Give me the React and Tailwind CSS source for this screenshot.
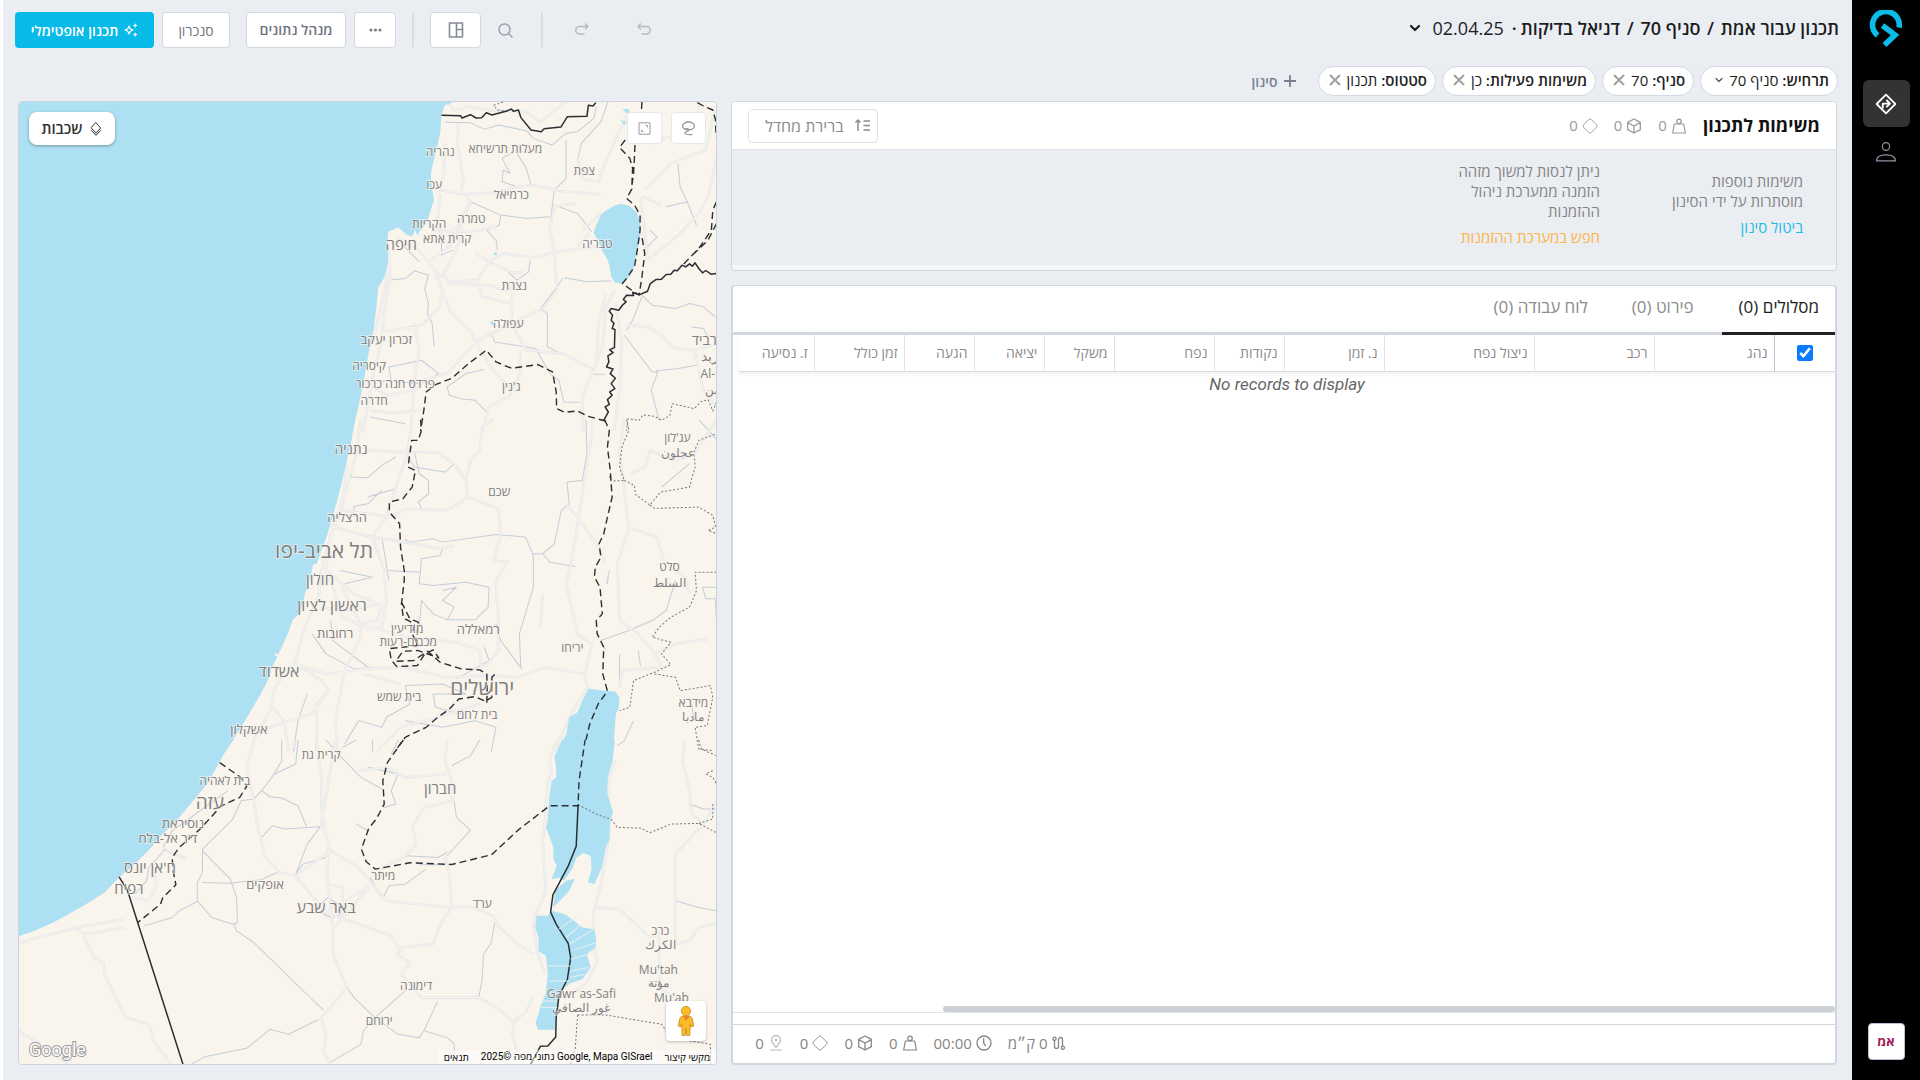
import React from "react";

function Icon({ size = 16, sw = 1.5, box = 24, children, className = "" }) {
  return (
    <svg width={size} height={size} viewBox={`0 0 ${box} ${box}`} fill="none" stroke="currentColor" strokeWidth={sw} strokeLinecap="round" strokeLinejoin="round" aria-hidden="true" className={`shrink-0 ${className}`}>
      {children}
    </svg>
  );
}

const WeightIcon = () => (
  <Icon sw={1.8}>
    <path d="M5 9h14l2.5 13.5h-19zM2.5 22.5h19" strokeLinecap="butt" />
    <circle cx="12" cy="5" r="3.4" />
  </Icon>
);
const CubeIcon = () => (
  <Icon sw={1.9}>
    <path d="M12 1.5l9.5 5v11L12 22.5l-9.5-5v-11zM2.5 7L12 12l9.5-5M12 12v10.5" />
  </Icon>
);
const DiamondIcon = () => (
  <Icon sw={1.4}>
    <path d="M10.2 2.2a2.6 2.6 0 0 1 3.6 0l8 8a2.6 2.6 0 0 1 0 3.6l-8 8a2.6 2.6 0 0 1-3.6 0l-8-8a2.6 2.6 0 0 1 0-3.6z" />
  </Icon>
);
const CloseIcon = () => (
  <Icon size={12} sw={2} box={12}>
    <path d="M1 1l10 10M11 1L1 11" strokeLinecap="butt" />
  </Icon>
);

function Stat({ icon, children }) {
  return (
    <span className="flex items-center gap-1">
      {icon}
      <span>{children}</span>
    </span>
  );
}

function Sidebar() {
  return (
    <nav className="flex w-[68px] shrink-0 flex-col items-center bg-black pb-5 pt-2.5">
      <a href="#home" aria-label="דף הבית" className="block">
        <svg width="34" height="38" viewBox="0 0 34 38" fill="none" stroke="#0bbbe8" strokeWidth="5.6" aria-hidden="true">
          <path d="M8.6 25.4A13.4 13.4 0 1 1 30 17.6" />
          <path d="M13.5 15.5L26 25L15.5 35" />
        </svg>
      </a>
      <a href="#planning" aria-label="תכנון" className="mt-8 flex h-[47px] w-[47px] items-center justify-center rounded-md bg-[#333333] text-white">
        <Icon size={22} sw={2}>
          <path d="M12 1.8L22.2 12L12 22.2L1.8 12z" />
          <path d="M8.5 16v-4.5h7M13 8.2l3.3 3.3L13 14.8" />
        </Icon>
      </a>
      <a href="#drivers" aria-label="נהגים" className="mt-3.5 text-[#8b95a5]">
        <Icon size={22} sw={1.2} box={22}>
          <ellipse cx="11" cy="5.5" rx="3.6" ry="3.9" />
          <path d="M1.5 19.8c0-4 4-6 9.5-6s9.5 2 9.5 6z" />
        </Icon>
      </a>
      <button className="mt-auto h-[37px] w-[37px] rounded border border-[#b9bfd0] bg-white text-[13px] font-bold text-[#a3195b]">אמ</button>
    </nav>
  );
}

const toolBtn = "flex h-9 items-center justify-center rounded-[4px] border border-[#d3d8e0] bg-white text-[14px]";

function Header() {
  return (
    <header className="flex items-start justify-between pl-3 pr-[13px] pt-3">
      <h1 className="flex items-center text-[18px] font-normal leading-8 text-[#1d1d1f]">
        <span className="font-semibold">
          תכנון עבור אמת <span className="mx-0.5">/</span> סניף 70 <span className="mx-0.5">/</span> דניאל בדיקות
        </span>
        <span className="mx-1 font-semibold">·</span>
        <button className="flex items-center gap-3">
          <span className="mr-1">02.04.25</span>
          <Icon size={12} sw={2.2} box={12}><path d="M2 4l4 4l4-4" /></Icon>
        </button>
      </h1>
      <div className="flex items-center text-[#6f7480]">
        <button aria-label="ביטול פעולה" className="ml-12 text-[#b7bac0]">
          <Icon size={14} box={14}><path d="M3.5 1L1 3.5L3.5 6M1 3.5h8.5a3.6 3.6 0 0 1 0 7.5H5" /></Icon>
        </button>
        <button aria-label="ביצוע חוזר" className="text-[#b7bac0]">
          <Icon size={14} box={14}><path d="M10.5 1L13 3.5L10.5 6M13 3.5H4.5a3.6 3.6 0 0 0 0 7.5H9" /></Icon>
        </button>
        <span className="ml-7 mr-8 h-[34px] w-0.5 bg-[#d9dce2]" />
        <button aria-label="חיפוש" className="text-[#9a9da3]">
          <Icon size={15} box={15} sw={1.4}><circle cx="6.5" cy="6.5" r="5.5" /><path d="M10.5 10.5L14 14" /></Icon>
        </button>
        <button aria-label="פריסה" className={`${toolBtn} mr-[17px] w-[51px] text-[#858b98]`}>
          <Icon size={16} box={16} sw={1.6}><path d="M1.5 1h13v14h-13zM8.5 1v14M8.5 7.5h6" /></Icon>
        </button>
        <span className="mx-4 h-[34px] w-0.5 bg-[#d9dce2]" />
        <button aria-label="עוד" className={`${toolBtn} w-[42px]`}>
          <svg width="13" height="4" fill="#7b808b" aria-hidden="true"><circle cx="2" cy="2" r="1.6" /><circle cx="6.5" cy="2" r="1.6" /><circle cx="11" cy="2" r="1.6" /></svg>
        </button>
        <button className={`${toolBtn} mr-2 w-[100px] pb-0.5 font-semibold`}>מנהל נתונים</button>
        <button className={`${toolBtn} mr-4 w-[68px]`}>סנכרון</button>
        <button className="mr-2 flex h-9 w-[139px] items-center justify-center gap-1.5 rounded-[4px] bg-[#08bae8] text-[14px] font-semibold text-white">
          <Icon size={14} box={14} sw={1.2}>
            <path d="M5 3l1.2 2.8L9 7L6.2 8.2L5 11L3.8 8.2L1 7l2.8-1.2z" />
            <path d="M11.2 1v3M9.7 2.5h3M11.2 10v3M9.7 11.5h3" />
          </Icon>
          תכנון אופטימלי
        </button>
      </div>
    </header>
  );
}

const chipClass = "flex h-[30px] items-center rounded-full border border-[#d3d8e2] bg-white pr-2 pb-0.5 text-[15px] text-[#222]";

function Chip({ label, value }) {
  return (
    <div className={`${chipClass} pl-2.5`}>
      <span><b className="font-semibold">{label}:</b> {value}</span>
      <button aria-label={`הסרת ${label}`} className="mr-1.5 text-[#a0a0a0]"><CloseIcon /></button>
    </div>
  );
}

function Filters() {
  return (
    <div className="mt-[18px] flex items-center gap-1.5 pr-3.5">
      <button className={`${chipClass} pl-3.5`}>
        <span><b className="font-semibold">תרחיש:</b> סניף 70</span>
        <Icon size={8} box={8} className="mr-1.5 text-[#555]" sw={1.2}><path d="M1 2.5l3 3l3-3" /></Icon>
      </button>
      <Chip label="סניף" value="70" />
      <Chip label="משימות פעילות" value="כן" />
      <Chip label="סטטוס" value="תכנון" />
      <button className="mr-4 flex items-center gap-1.5 text-[14px] font-semibold text-[#7a8091]">
        <Icon size={12} box={12} sw={1.8}><path d="M6 0v12M0 6h12" /></Icon>
        סינון
      </button>
    </div>
  );
}

function TasksPanel() {
  return (
    <section className="flex h-[170px] flex-col overflow-hidden rounded-[4px] border border-[#d2d7df] bg-[#f3f5f9]">
      <div className="flex h-12 shrink-0 items-center border-b border-[#e2e4e8] bg-white pl-4 pr-4">
        <h2 className="pb-0.5 text-[18px] font-bold leading-6 text-[#111]">משימות לתכנון</h2>
        <div className="mr-4 flex items-center gap-4 text-[15px] text-[#9a9a9a]">
          <Stat icon={<WeightIcon />}>0</Stat>
          <Stat icon={<CubeIcon />}>0</Stat>
          <Stat icon={<DiamondIcon />}>0</Stat>
        </div>
        <button className="mr-auto flex h-[34px] w-[130px] items-center justify-between rounded border border-[#e0e2e6] pl-4 pr-1.5 text-[16px] text-[#8c8c8c]">
          <Icon size={17} box={17} sw={1.5}>
            <path d="M9.5 4h6.5M9.5 8.5h6.5M9.5 13h6.5M4 14V3M1.5 5.5L4 3l2.5 2.5" strokeLinecap="butt" />
          </Icon>
          ברירת מחדל
        </button>
      </div>
      <div className="flex h-[115px] shrink-0 items-center bg-[#eaeef3] pb-2 pr-[33px] text-[15px] leading-5 text-[#858585]">
        <div className="w-[203px]">
          <p className="w-[132px]">משימות נוספות מוסתרות על ידי הסינון</p>
          <a href="#clear" className="mt-1.5 block text-[#22bce6]">ביטול סינון</a>
        </div>
        <div>
          <p>ניתן לנסות למשוך מזהה<br />הזמנה ממערכת ניהול<br />ההזמנות</p>
          <a href="#orders" className="mt-1.5 block text-[#ffb347]">חפש במערכת ההזמנות</a>
        </div>
      </div>
    </section>
  );
}

const columns = [
  ["נהג", "w-[120px]"],
  ["רכב", "w-[120px]"],
  ["ניצול נפח", "w-[150px]"],
  ["נ. זמן", "w-[100px]"],
  ["נקודות", "w-[70px]"],
  ["נפח", "w-[100px]"],
  ["משקל", "w-[70px]"],
  ["יציאה", "w-[70px]"],
  ["הגעה", "w-[70px]"],
  ["זמן כולל", "w-[90px]"],
  ["ז. נסיעה", ""],
];

function RoutesPanel() {
  return (
    <section className="mt-[14px] flex min-h-0 flex-1 flex-col overflow-hidden rounded-[4px] border-2 border-t border-[#d2d7df] bg-white">
      <div role="tablist" className="flex h-[49px] shrink-0 border-b-[3px] border-[#d2d7df] text-[17px]">
        <button role="tab" aria-selected="true" className="-mb-[3px] border-b-[3px] border-[#222] pb-1 pl-[17px] pr-4 text-[#1d1d1f]">מסלולים (0)</button>
        <button role="tab" aria-selected="false" className="mr-3 px-4 pb-1 text-[#8c8c8c]">פירוט (0)</button>
        <button role="tab" aria-selected="false" className="mr-3 px-4 pb-1 text-[#8c8c8c]">לוח עבודה (0)</button>
      </div>
      <div className="min-h-0 flex-1 border-b border-[#e2e4e8] pl-1.5">
        <table className="w-full table-fixed border-collapse text-[14px] text-[#8c8c8c]">
          <thead>
            <tr className="h-9 border-b border-[#dcdcdc] shadow-[0_3px_5px_rgba(0,0,0,0.07)]">
              <th className="w-[61px] border-l border-[#c4c4c4] text-center">
                <input type="checkbox" defaultChecked aria-label="בחירת הכל" className="mx-auto block h-4 w-4 accent-[#0a7aff]" />
              </th>
              {columns.map(([name, w]) => (
                <th key={name} className={`${w} whitespace-nowrap border-l border-[#e2e2e2] pr-1.5 text-right font-normal last:border-l-0`}>{name}</th>
              ))}
            </tr>
          </thead>
          <tbody>
            <tr>
              <td colSpan={12} className="text-center font-['Roboto'] text-[17px] italic leading-6 text-[#666]">No records to display</td>
            </tr>
          </tbody>
        </table>
      </div>
      <div className="relative h-0 shrink-0">
        <div className="absolute bottom-px right-0 h-1.5 w-[81%] rounded-full bg-[#cccfd4]" />
      </div>
      <footer className="mt-[11px] flex h-[39px] shrink-0 items-center justify-end gap-4 border-t border-[#d2d7df] pb-0.5 pl-[22px] text-[15px] text-[#868686]">
        <Stat icon={
          <Icon size={14} box={14} sw={1.3}>
            <path d="M2.5 4.5v6a2 2 0 0 0 4 0v-7a2 2 0 0 1 4 0v6.5" /><circle cx="2.5" cy="2.8" r="1.6" /><circle cx="10.8" cy="11.8" r="1.6" />
          </Icon>}>0 ק״מ</Stat>
        <Stat icon={<Icon sw={2}><circle cx="12" cy="12" r="10.5" /><path d="M11.5 5.5V12l2.5 4" /></Icon>}>00:00</Stat>
        <Stat icon={<WeightIcon />}>0</Stat>
        <Stat icon={<CubeIcon />}>0</Stat>
        <Stat icon={<DiamondIcon />}>0</Stat>
        <Stat icon={
          <Icon sw={1.7} className="opacity-60">
            <path d="M12 18.5C8 14 5.5 11 5.5 7.5a6.5 6.5 0 0 1 13 0C18.5 11 16 14 12 18.5zM4 22.5h16" /><circle cx="12" cy="7.5" r="1" />
          </Icon>}>0</Stat>
      </footer>
    </section>
  );
}

/* The map is drawn in three stacked tiles, each in its own 1568-unit wide grid. */
const tiles = [
  {
    at: "translate(0 90) scale(0.46556 0.33333)",
    water: [
      "M30 20H985L970 38L955 46L948 75L945 130L935 190L927 235L925 262L928 300L932 330L925 360L918 390L908 415L900 425L896 436L891 418L885 440L872 432L855 411L845 418L833 425V520L825 562L812 592L808 650L802 720L790 800L780 880L768 960L757 1022H30Z",
      "M1334 341L1322 345L1300 362L1290 374L1280 405L1274 428L1284 450L1292 480L1303 505L1309 530L1312 560L1320 577L1332 580L1345 570L1357 545L1364 510L1370 470L1375 430L1374 395L1366 365L1350 347Z",
      "M1336 58L1350 56V70L1344 68ZM1332 90L1346 96L1340 106Z",
      "M1060 490L1064 485L1068 493L1062 496ZM1052 694H1064V704H1056Z",
    ],
    border: [
      "M948 76L989 77L992 84L1010 74L1022 84L1034 83L1044 68L1056 75L1086 64L1098 57L1102 64L1113 60L1118 82L1140 120L1162 125L1168 116L1204 111L1218 80L1260 79L1263 46L1273 48L1279 38",
      "M1568 560L1538 550L1526 552L1515 541L1508 548L1500 535L1492 518L1486 528L1480 521L1472 530L1464 525L1454 542L1447 540L1440 552L1430 553L1420 567L1408 568L1396 580L1390 603L1372 614L1358 606L1360 616L1345 615L1338 628L1344 635L1336 645L1328 660L1312 655L1308 663L1315 675L1312 690L1318 700L1314 715L1320 718L1319 772L1309 778L1316 787L1305 797L1307 815L1302 830L1316 836L1310 850L1321 864L1312 880L1320 895L1309 905L1314 915L1304 928L1308 942L1299 950L1306 965L1296 990",
    ],
    dash: [
      "M1378 36L1376 85L1364 130L1362 200L1360 250L1355 300L1345 325L1362 345L1374 375L1374 420L1368 480L1362 530L1345 565L1336 580L1362 606L1372 614L1378 560L1384 490L1378 440",
      "M1342 150L1330 172L1352 205L1358 235L1356 300",
      "M1497 38L1510 48L1530 60L1536 90L1537 140M1538 335L1530 360L1527 420L1500 475L1465 525",
      "M1538 400L1520 450L1490 490",
      "M1300 992L1262 978L1240 962L1212 966L1195 955L1194 905L1186 845L1155 823L1098 834L1065 815L1044 780L1004 822L970 864L935 883L915 905L910 960L903 1022",
    ],
    dot: ["M1538 935L1530 962L1520 928L1505 934L1490 955L1443 940L1438 975L1420 990L1405 978L1380 974L1372 990L1348 985L1345 1022", "M1080 36L1060 46L1068 60L1090 64"],
    road: [
      "M960 36L975 60L1010 50L1060 62L1130 64L1160 95L1200 50L1215 36M985 98L982 160L995 270L990 312M955 160L952 260L942 300L1000 312L1060 308L1110 290L1150 286L1200 302L1290 314",
      "M945 310L940 380L946 430L960 465L1010 340L1000 315M930 420L975 425L1010 425L1065 410M835 470L838 560L828 640L815 780L800 860L780 1022M825 480L830 570L818 650L805 730",
      "M850 440L900 480L935 545L965 660L1012 725L1020 755L1062 845L1102 905M925 510L965 470L985 430L1005 340M955 555L965 580L1050 585L1090 605L1108 575M930 540L948 560L972 500L990 440",
      "M970 575L1025 570L1050 515L1020 490M1050 515L1080 490L1150 502L1190 485L1280 470M1050 515L1100 548L1125 545M1190 485L1180 420L1190 350L1235 340M1030 590L1035 620L1100 640L1098 700L1130 780L1210 790L1270 835",
      "M1100 605L1098 700M1040 740L1098 700L1165 655L1195 600L1190 485M1012 750L1060 735M890 900L910 870L960 850L1005 780L1040 740M890 700L900 780L890 870L882 1022M825 725L905 705L945 650L950 600",
      "M1115 780L1118 850L1095 915L1050 950L1035 1022M1275 835L1250 920L1252 1022M1275 835L1295 760L1300 650L1320 600M1320 640L1335 750L1330 900L1318 1022M1240 205L1250 265L1285 275L1300 215L1350 60",
      "M1390 510L1460 430L1500 370L1520 320L1538 200M1385 300L1440 220L1515 180L1535 60M1375 320L1378 360L1390 500M1500 36L1498 110L1400 160M1345 705L1390 710L1420 735L1445 772L1490 780L1538 760M1490 780L1510 900L1538 950",
      "M1380 320L1420 345M1300 610L1285 700L1280 830M795 960L840 968L905 960M780 870L830 915L890 900M1265 430L1240 470M1290 370L1250 420",
    ],
    river: [
      "M955 97L1010 98L1040 118L1070 105L1130 122L1145 145L1185 165L1215 130L1240 125L1275 85L1280 50M1110 190L1130 235L1140 285L1110 290L1078 275L1080 240L1095 250L1078 205L1098 190",
      "M1215 150L1215 265L1190 300L1185 355L1180 420M1190 345L1240 370L1270 425M1010 335L1075 375L1130 385L1180 380M1075 375L1072 405L1045 420L1065 450L1068 480M1240 210L1248 160L1290 95L1305 36",
      "M832 570L870 565L890 542L920 555L912 595L920 640L918 670L928 700L932 768M948 420L948 495L972 480M1055 730L1062 755L1150 775L1180 850L1200 870L1210 935L1245 936M1208 565L1180 620L1160 655L1175 670L1175 770L1205 790",
      "M1212 563L1260 575L1312 572M1378 615L1400 645L1450 655L1480 640L1510 650L1535 680M1345 720L1358 690L1378 620M1455 220L1460 290L1475 335L1430 350M1475 335L1495 405M1485 710L1510 715L1520 740M1340 735L1400 845L1412 845L1398 900L1415 990M1408 842L1455 835L1495 825",
      "M840 870L835 830L905 810L942 850L905 880L800 870M960 890L1000 850L1040 838M960 890L965 915L990 925L1020 930L1045 965M1300 852H1275M795 980L870 1000M1138 510L1135 545L1110 570L1090 545M1395 420L1410 440L1390 470M865 465L900 515",
    ],
  },
  {
    at: "translate(0 420) scale(0.46556 0.33333)",
    water: ["M30 -2H762L755 60L748 100L735 180L724 240L712 300L702 345L692 385L680 430L672 433L668 465L655 520L645 575L628 600L618 640L605 680L598 700L590 698V705L596 708L586 735L575 780L560 820L535 880L515 925L500 960L485 992H30Z", "M1264 804L1300 811L1320 812L1330 830L1328 862L1322 880L1316 992H1204L1208 960L1216 940L1222 890L1240 875L1250 840Z"],
    border: [],
    dash: [
      "M903 -2L905 30L898 60L884 60L880 100L876 140L892 150L885 200L865 235L836 245L836 275L858 310L860 380L868 450L868 480L862 550L866 592L890 610L885 640L898 675L836 684L840 718L852 738L896 735L912 700L930 688L942 712L898 690L865 692L850 722L888 720L918 692L945 725L990 745L1030 748L1045 760L1046 800L1045 850",
      "M862 545L880 595L898 605L894 680",
      "M1062 762L1056 770V830L1042 842L1020 828L985 835L965 865L940 890L915 920L870 950L848 992",
      "M1298 -2L1308 30L1304 80L1310 150L1314 230L1304 290L1296 340L1286 370L1290 410L1278 440L1276 470L1288 500L1293 580L1280 600L1282 640L1296 680L1294 760L1304 812L1284 850L1266 910L1252 992",
    ],
    dot: ["M1345 -2L1350 30L1335 80L1330 140L1340 180L1312 182L1308 168M1340 180L1362 195L1364 222L1395 254L1418 215L1480 200L1492 140L1490 95L1500 60L1538 40M1395 254L1405 264L1500 260L1530 285L1536 320L1520 330L1538 340", "M1538 455H1492L1495 510L1480 560L1440 590L1415 620L1400 650L1440 665L1420 700L1440 732L1405 755L1360 780L1352 860L1330 870M1405 760L1450 770L1460 810L1525 795L1530 830L1518 915L1492 920L1500 985L1530 990"],
    road: [
      "M775 -2L765 100L745 200L715 320L690 450L685 520L650 640L635 720L590 800L580 870L545 960M745 130L735 260L710 350L700 450L720 520L735 590L780 615L880 650M885 -2L875 100L850 200L830 290L800 350L825 450L830 540L820 620L770 620M870 95L940 96L975 130L1000 180L1005 230L1070 265L1075 345L1060 420L1090 425L1065 480L1065 500L1070 600L1070 690L1040 740",
      "M1060 -2L1035 20L1030 90L1010 120L1000 180M1005 230L960 270L870 265L840 290M715 320L800 350L870 365L945 385L975 375M700 450L760 520L820 555L810 600L760 610M690 560L740 570L820 550M735 270L790 280L840 290M790 90L870 95M735 500L770 600L775 650L740 750L720 900L725 992",
      "M635 730L700 760L780 745L870 740L900 752L960 770L1040 765L1110 770L1170 740L1255 760M635 730L690 780L705 810L670 880L600 910L540 940M880 650L980 665L1030 690L1035 760M705 810L680 850L680 992M780 760L860 790",
      "M1270 -2L1272 40L1265 90L1225 440L1215 490L1240 640L1270 670L1255 770L1262 800L1230 870L1190 992M1215 250L1250 310L1285 380L1300 430M1340 -2L1330 100L1350 320L1325 430L1330 600L1370 640L1405 700L1420 740L1335 750L1330 800",
      "M1350 320L1410 350L1425 420L1470 470L1480 520M1405 700L1450 670L1520 655M1355 160L1385 140L1395 90L1450 120L1490 100L1538 -2M585 860L610 900L620 992M1165 520L1160 620M1030 850L940 890L860 920L810 992",
    ],
    river: [
      "M890 95L900 160L920 180L920 220L898 245L905 262M870 95L890 140L955 155L975 130M755 145V170L790 172L820 135L850 110M870 355L880 365L930 355L950 365L1065 342L1128 350L1145 405L1145 500L1115 640L1118 740",
      "M950 385L945 405L905 415L900 490L930 495L1000 485L1050 500L1048 560L1020 598L960 598L930 580L905 540L900 620M1258 -2L1260 100L1250 180L1217 185L1222 250L1205 270L1190 370L1165 400L1180 425L1235 438M1165 400H1145",
      "M820 210L790 250L760 258V290M730 450L800 470M740 490L800 470M820 350L835 480M835 450L900 455M710 600L715 660L790 740M670 640L700 700L760 745L800 740M1065 610L1075 660L1120 745M1040 680L1050 720L980 775",
      "M870 795L880 850L830 890L820 920L770 900L740 970M870 795L950 790L1000 820L930 820L935 860L990 880M1450 480L1430 570L1400 600L1350 630L1290 660L1300 690M1370 690L1375 735M1330 700V800M1420 200L1480 130M870 900L950 920L1020 900L1065 920L1055 992M1490 900L1485 850M1360 900L1340 960L1325 975",
      "M660 820L640 900L630 992M790 230L850 205M950 510L980 500L950 540L975 560L960 598M1540 500H1508L1515 535H1536L1538 610M1500 -2L1540 60",
    ],
  },
  {
    at: "translate(0 740) scale(0.46556 0.33333)",
    water: [
      "M30 -2H500L485 30L465 80L445 130L415 180L385 230L350 280L325 320L290 370L256 410L225 455L185 490L150 518L115 545L75 570L38 588H30Z",
      "M1206 -2H1320L1315 60L1305 110L1303 155L1316 215L1310 240L1308 300L1300 320L1292 380L1276 430L1262 424L1270 385L1268 345L1252 337L1238 350L1228 385L1210 420L1200 410L1184 415L1195 375L1188 355L1188 320L1178 280L1172 262L1176 235L1180 160L1184 120L1194 110V80L1190 50Z",
      "M1234 414L1215 420L1192 448L1188 500L1205 475L1222 450Z",
      "M1152 525H1175L1186 510L1215 522L1250 560L1276 565L1280 600L1278 620L1260 640L1268 680L1250 715L1224 728L1206 745L1196 790L1192 866H1155L1150 845L1160 800L1172 755L1176 700L1172 645L1156 630V590L1149 560Z",
    ],
    border: ["M256 408L274 448L296 545L395 978", "M1241 192L1237 316L1220 375L1187 462L1182 514L1194 550L1220 608L1225 650L1218 715L1200 765L1194 830L1193 888L1176 915L1160 916L1136 978"],
    dash: [
      "M866 -2L832 65L822 120L825 190L808 235L792 262L776 325L786 362L806 385L880 366L970 371L1055 342L1115 265L1180 195H1241L1243 120L1256 -2",
      "M472 66L515 108L530 136L515 170L475 196L430 265L385 320L370 350L372 390L378 432L350 470L345 490L296 545",
    ],
    dot: ["M1241 192L1280 220L1312 236L1325 260L1375 262L1395 276L1440 250L1500 248L1538 276M1500 248L1530 235V190M1540 850M1240 822H1300L1420 850L1440 890L1525 910V980M1240 822L1235 920L1225 970", "M1500 -2L1505 25L1538 45M1530 90L1515 100L1530 110L1538 130"],
    road: [
      "M680 -2L690 100V200L705 330L702 400L710 500L715 560V640L745 740L690 830L700 880L695 930L710 975M720 -2L690 250L710 330L770 380L800 430L830 480L965 500L1010 497L1060 525L1065 550L1110 610L1145 640M530 80L545 180L555 270L570 350L600 395L635 405L700 515L840 585L860 630L850 640L880 665L862 700L905 770L1030 770L1065 800L1105 845L1100 880L1110 930L1080 978",
      "M38 610L80 590L165 560L265 535M165 560L180 580L270 560M180 585L205 655L222 665L225 700L270 830L320 850L330 900L370 975M38 868L100 920L150 975M965 400L970 500L945 550L930 610L860 620M960 -2L955 60L970 120L972 180L910 200L885 260L895 310L870 345L810 390M955 345L965 400",
      "M545 -2L530 80M740 525L790 440L700 515M715 560L735 535V440L705 430M1195 -2L1180 60L1184 90L1175 130L1170 240L1165 300L1172 450L1150 520L1145 560L1155 640L1170 700M1320 60L1305 130L1308 280L1290 430L1275 510L1272 600L1282 660L1262 720L1230 760M1275 500L1330 505L1395 590L1415 580V740L1470 790",
      "M1450 610V340L1510 250L1538 180M1450 610L1480 600L1500 560L1538 548M1470 -2L1465 60L1480 150L1485 220L1510 250M640 400L710 330M630 -2L635 30M770 90L830 80L870 110L960 100M1145 770L1130 810L1105 840M280 470L320 480L335 440L332 380M355 325L400 355",
    ],
    river: [
      "M605 -2V60L590 98L562 150L545 175L518 180L500 235L435 325L435 395L424 425L424 480L455 530L500 550L510 545L508 470L495 415L435 330M435 425L495 427L560 417L595 395M562 150L580 168L605 172L640 195L658 258M562 290L585 255L610 265L688 258L660 310L635 400M503 550L508 570L545 605L670 775L695 808M745 740L760 770L805 830L870 750",
      "M685 835L620 880L580 865L530 922L440 947L405 975M805 830L780 870L775 910L708 965M808 832L855 880L900 890L910 870L940 780M912 870L960 890L975 908V940M1062 545L1055 605L1038 640L1035 720L1028 768M740 60L775 110L820 145M790 80L855 100L840 150L850 190L825 200M975 180L980 230L1010 268L960 345M872 345L940 350L960 335M900 372L960 372",
      "M825 465L835 435L870 430L915 385M700 -2L740 60M350 325L380 345M310 555L370 530L385 510L424 482M355 325L320 380L315 420L290 460M635 400L650 370L700 350M795 410L820 470M765 250L790 270M1480 190L1510 205L1538 205M640 -2L635 70L590 100M735 20L765 -2M800 -2L800 35M855 -2L840 40M1030 -2L1010 45L970 75M350 320L370 270L490 150M1450 480L1500 500L1538 510M680 500L705 470L725 490M690 510C700 535 730 535 738 505",
    ],
  },
];

const cities = [
  ["נהריה", 440, 156, 12], ["מעלות תרשיחא", 505, 153, 12], ["צפת", 584, 175, 12], ["עכו", 434, 189, 12], ["כרמיאל", 511, 199, 12],
  ["הקריות", 429, 228, 12], ["טמרה", 471, 223, 12], ["קרית אתא", 447, 243, 12], ["חיפה", 401, 250, 15], ["טבריה", 597, 248, 12],
  ["נצרת", 514, 290, 12], ["עפולה", 508, 328, 12], ["זכרון יעקב", 386, 344, 13], ["קיסריה", 369, 370, 12], ["פרדס חנה כרכור", 395, 388, 12],
  ["חדרה", 374, 405, 12], ["ג'נין", 511, 391, 12], ["נתניה", 351, 454, 14], ["שכם", 499, 496, 12], ["הרצליה", 347, 522, 13],
  ["תל אביב-יפו", 324, 558, 21], ["חולון", 320, 585, 15], ["ראשון לציון", 332, 610, 16], ["רחובות", 335, 637, 13], ["מודיעין", 407, 632, 12],
  ["מכבים-רעות", 408, 645, 12], ["רמאללה", 478, 633, 13], ["יריחו", 572, 651, 12], ["אשדוד", 279, 676, 16], ["ירושלים", 482, 694, 21],
  ["בית שמש", 399, 700, 12], ["בית לחם", 477, 718, 12], ["אשקלון", 249, 733, 13], ["קרית גת", 321, 758, 12], ["חברון", 440, 793, 15],
  ["בית לאהיה", 225, 784, 12], ["עזה", 210, 808, 19], ["נוסיראת", 183, 827, 13], ["דיר אל-בלח", 168, 842, 13], ["ח'אן יונס", 150, 872, 15],
  ["רפיח", 129, 893, 15], ["מיתר", 383, 879, 12], ["אופקים", 265, 888, 13], ["באר שבע", 326, 912, 16], ["ערד", 482, 907, 12],
  ["דימונה", 416, 989, 12], ["ירוחם", 379, 1024, 12], ["עג'לון", 677, 442, 12], ["عجلون", 678, 457, 12], ["סלט", 669, 571, 12],
  ["السلط", 669, 586, 12], ["מידבא", 693, 706, 12], ["مادبا", 693, 720, 12], ["כרכ", 660, 934, 12], ["الكرك", 660, 948, 12],
  ["Mu'tah", 658, 973, 12], ["مؤتة", 658, 986, 12], ["Mu'ab", 671, 1001, 12], ["Gawr as-Safi", 581, 997, 12], ["غور الصافي", 581, 1011, 12],
  ["ארביד", 708, 345, 14], ["إربد", 712, 361, 14], ["Al-Husn", 722, 378, 12], ["الحصن", 722, 394, 12],
];

function MapDrawing() {
  return (
    <svg className="absolute inset-0 h-full w-full" viewBox="19 102 697 961" preserveAspectRatio="xMidYMid slice" role="img" aria-label="מפה" direction="ltr">
      <rect x="0" y="80" width="740" height="1000" fill="#f9f4ec" />
      {tiles.map((t) => (
        <g key={t.at} transform={t.at} fill="none" strokeLinejoin="round">
          <path d={t.river.join("")} stroke="#c3cdda" vectorEffect="non-scaling-stroke" />
          <path d={t.road.join("")} stroke="#e4e7e9" strokeWidth="2.6" vectorEffect="non-scaling-stroke" />
          <path d={t.road.join("")} stroke="#f7f4ee" strokeWidth="1" vectorEffect="non-scaling-stroke" />
        </g>
      ))}
      {tiles.map((t) => (
        <g key={t.at} transform={t.at} fill="none" strokeLinejoin="round">
          <path d={t.water.join("")} fill="#ade0f3" />
          <path d={t.dot.join("")} stroke="#77777a" strokeDasharray="2 2" vectorEffect="non-scaling-stroke" />
          <path d={t.border.join("")} stroke="#2b2e33" strokeWidth="1.5" vectorEffect="non-scaling-stroke" />
          <path d={t.dash.join("")} stroke="#2b2e33" strokeWidth="1.4" strokeDasharray="7 4" vectorEffect="non-scaling-stroke" />
        </g>
      ))}
      <g transform="translate(0 740) scale(0.46556 0.33333)" stroke="#e9eef0" strokeWidth="1" fill="none">
        <path d="M1215 590L1250 548M1222 610L1275 565M1228 630L1280 605M1225 655L1262 640M1226 690L1262 680M1176 675H1224M1180 720H1222M1160 780H1196M1162 800H1196M1224 710L1255 700M1200 565L1240 525" vectorEffect="non-scaling-stroke" />
      </g>
      <path d="M606 583L609 569L608 577L607 583z" fill="#cddbe6" stroke="#cddbe6" />
      <g fontFamily="'Open Sans', Roboto, sans-serif" textAnchor="middle" fill="#808080" stroke="#f9f6f0" strokeWidth="2" strokeOpacity="0.6" paintOrder="stroke">
        {cities.map(([name, x, y, size]) => (
          <text key={name} x={x} y={y} fontSize={size}>{name}</text>
        ))}
      </g>
    </svg>
  );
}

const mapBtn = "flex h-8 w-[35px] items-center justify-center rounded-[4px] border border-[#e8e8e8] bg-white text-[#9a9a9a]";

function MapPanel() {
  return (
    <section className="relative min-w-0 flex-[698] overflow-hidden rounded-[4px] border border-[#ccd3dc] bg-[#f9f4ec]">
      <MapDrawing />
      <button className="absolute left-2.5 top-2.5 flex h-[33px] w-[86px] items-center justify-center gap-1.5 rounded-lg bg-white text-[15px] font-semibold text-[#333] shadow-[0_1px_3px_rgba(0,0,0,0.35)]">
        <Icon size={14} box={14} sw={1}><path d="M7 .8l4.6 5.2L7 11.2L2.4 6zM2.4 8.5L7 13.4l4.6-4.9" /></Icon>
        שכבות
      </button>
      <div className="absolute right-2.5 top-2.5 flex gap-[9px]">
        <button aria-label="בחירת אזור" className={mapBtn}>
          <Icon size={15} box={15} sw={1.3}>
            <ellipse cx="7.5" cy="5" rx="6" ry="4" /><path d="M4 8.3c1.5-1.5 4.5-.5 3.5 1.2S3 11 4 12.5s3 1.3 7 1" />
          </Icon>
        </button>
        <button aria-label="מסך מלא" className={mapBtn}>
          <Icon size={13} box={13} sw={1}><path d="M1 .8h11v11.4H1zM7.5 3.5h2v2M3.5 7.5v2h2" strokeLinecap="butt" /></Icon>
        </button>
      </div>
      <button aria-label="Street View" className="absolute bottom-[23px] right-2.5 flex h-10 w-10 items-center justify-center rounded-sm bg-white shadow-[0_1px_3px_rgba(0,0,0,0.25)]">
        <svg width="18" height="32" viewBox="0 0 18 32" fill="#fbbc2c" stroke="#c58612" strokeWidth=".8" aria-hidden="true">
          <path d="M5 11h8l2 2l1.8 8l-2.5.8l-1-3l-.5 11.7h-3l-.8-7l-.8 7h-3L4.7 18.8l-1 3l-2.5-.8L3 13z" />
          <path d="M5.5 11h7L9 16z" fill="#e8842a" stroke="none" />
          <circle cx="9" cy="6" r="4.6" />
        </svg>
      </button>
      <div dir="ltr" className="absolute bottom-0 left-2.5 font-['Roboto'] text-[18px] leading-7 text-white [-webkit-text-stroke:2px_#9a9a9a] [paint-order:stroke]">Google</div>
      <div className="absolute bottom-0 right-0 flex h-[14px] items-center gap-3 bg-white/50 px-1.5 text-[10px] leading-none text-black">
        <button>מקשי קיצור</button>
        <span className="font-['Roboto','Open_Sans']" dir="ltr">נתוני מפה ©2025 Google, Mapa GISrael</span>
        <a href="#terms">תנאים</a>
      </div>
    </section>
  );
}

export default function App() {
  return (
    <div dir="rtl" className="flex h-screen min-h-[600px] bg-white font-['Open_Sans',Roboto,sans-serif]">
      <Sidebar />
      <main className="ml-[3px] flex min-w-0 flex-1 flex-col bg-[#eaeef3]">
        <Header />
        <Filters />
        <div className="mb-[15px] mt-[5px] flex min-h-0 flex-1 gap-[14px] px-[15px]">
          <div className="flex min-w-0 flex-[1107] flex-col">
            <TasksPanel />
            <RoutesPanel />
          </div>
          <MapPanel />
        </div>
      </main>
    </div>
  );
}
